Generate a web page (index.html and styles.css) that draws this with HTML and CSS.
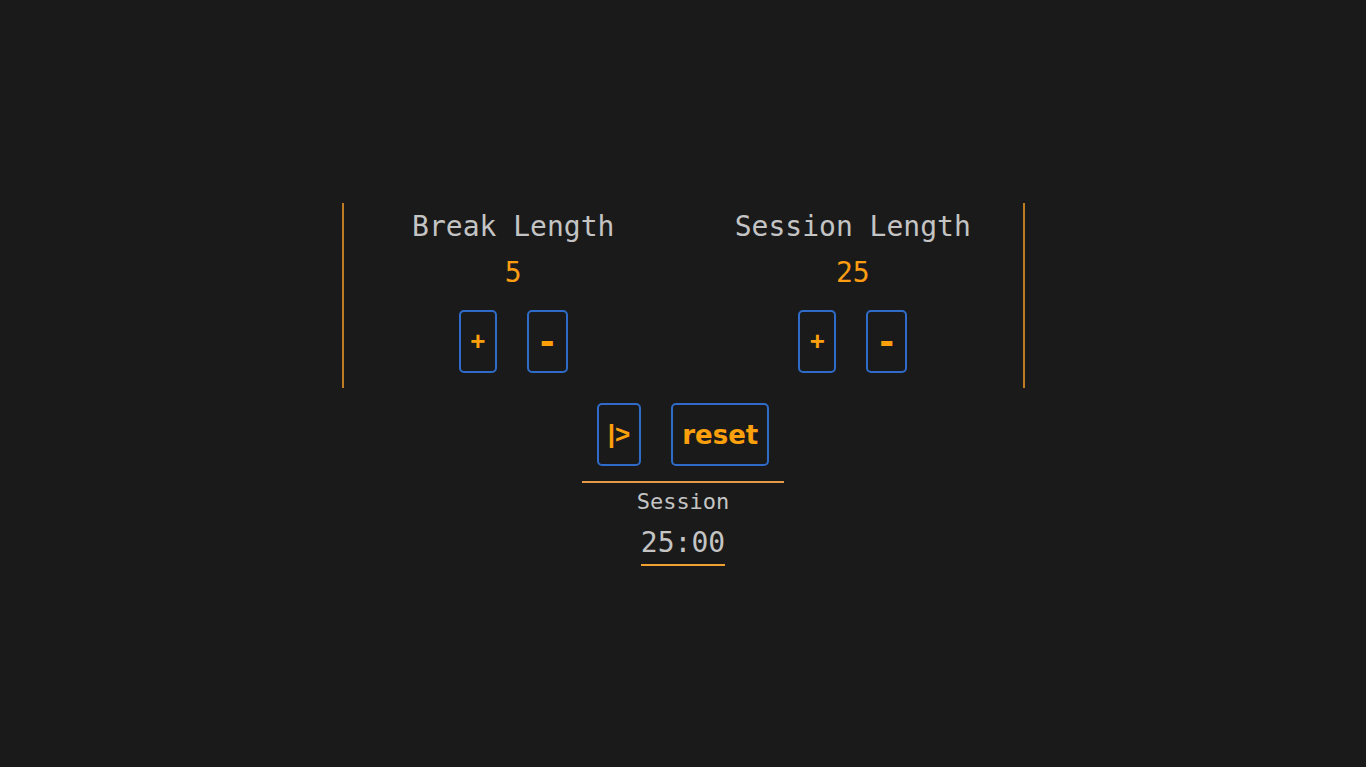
FILE: index.html
```html
<!DOCTYPE html>
<html lang="en">
<head>
<meta charset="utf-8">
<meta name="viewport" content="width=device-width, initial-scale=1">
<title>Session Timer</title>
<link rel="stylesheet" href="styles.css">
</head>
<body>
<main class="clock">
  <div class="settings">
    <section class="setting">
      <h1 class="setting-title">Break Length</h1>
      <div class="setting-value">5</div>
      <div class="buttons">
        <button class="btn btn-plus" type="button">+</button>
        <button class="btn btn-minus" type="button">-</button>
      </div>
    </section>
    <section class="setting">
      <h1 class="setting-title">Session Length</h1>
      <div class="setting-value">25</div>
      <div class="buttons">
        <button class="btn btn-plus" type="button">+</button>
        <button class="btn btn-minus" type="button">-</button>
      </div>
    </section>
  </div>
  <div class="buttons controls">
    <button class="btn btn-play" type="button">|&gt;</button>
    <button class="btn btn-reset" type="button">reset</button>
  </div>
  <div class="timer-label">Session</div>
  <div class="timer">25:00</div>
</main>
</body>
</html>
```
FILE: styles.css
```css
* {
  box-sizing: border-box;
}

body {
  margin: 0;
  padding-top: 2px;
  min-height: 100vh;
  display: flex;
  align-items: center;
  justify-content: center;
  background: #1a1a1a;
  color: #c4c4c4;
  font-family: "DejaVu Sans Mono", monospace;
}

.clock {
  width: 50%;
  min-width: 520px;
  display: flex;
  flex-direction: column;
  align-items: center;
}

.settings {
  width: 100%;
  display: grid;
  grid-template-columns: 1fr 1fr;
  border-left: 2px solid #bd7c22;
  border-right: 2px solid #bd7c22;
}

.setting {
  display: flex;
  flex-direction: column;
  align-items: center;
}

.setting-title {
  margin: 0;
  font-size: 28px;
  font-weight: 400;
  line-height: 48px;
}

.setting-value {
  color: #ff9d12;
  font-size: 28px;
  line-height: 44px;
}

.buttons {
  display: flex;
  gap: 30px;
  padding: 15px;
}

.btn {
  height: 63px;
  padding: 0 9px;
  border: 2px solid #2f6bc8;
  border-radius: 5px;
  background: transparent;
  color: #ffa00a;
  font: bold 26px "Liberation Sans", sans-serif;
  cursor: pointer;
}

.btn-plus {
  width: 38px;
}

.btn-minus {
  width: 41px;
  font-family: "DejaVu Sans", sans-serif;
  font-size: 36px;
}

.btn-reset {
  font-family: "DejaVu Sans", sans-serif;
}

.controls {
  border-bottom: 2px solid #e59a48;
}

.timer-label {
  font-size: 22px;
  line-height: 38px;
}

.timer {
  border-bottom: 2px solid #f0a030;
  font-size: 28px;
  line-height: 43px;
}
```
